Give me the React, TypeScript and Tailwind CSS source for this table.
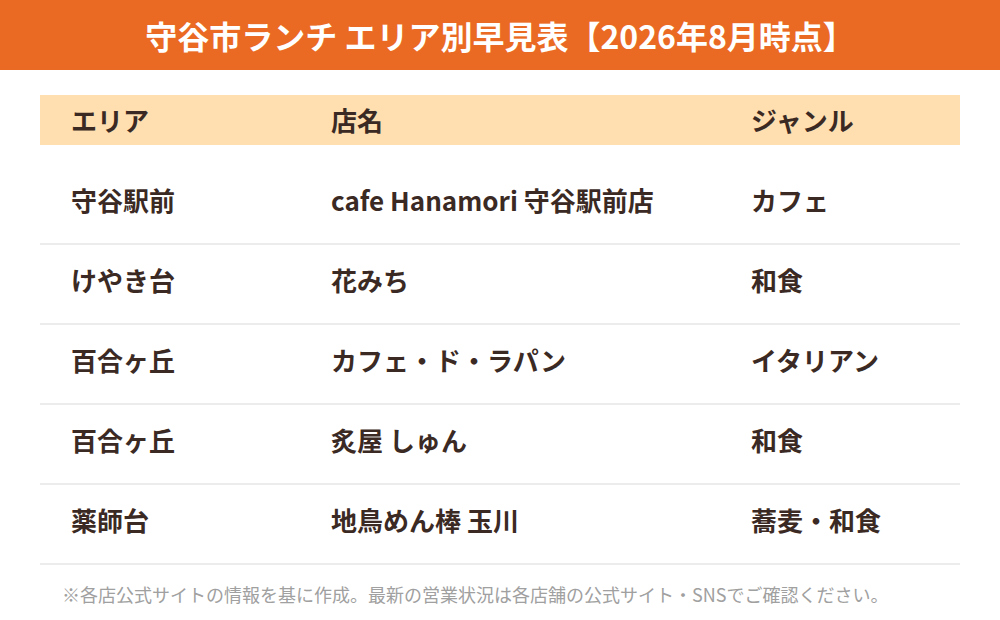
import React from "react";

const rows = [
  ["守谷駅前", "cafe Hanamori 守谷駅前店", "カフェ"],
  ["けやき台", "花みち", "和食"],
  ["百合ヶ丘", "カフェ・ド・ラパン", "イタリアン"],
  ["百合ヶ丘", "炙屋 しゅん", "和食"],
  ["薬師台", "地鳥めん棒 玉川", "蕎麦・和食"],
];

export default function App() {
  return (
    <div
      className="w-[1000px] h-[620px] bg-white overflow-hidden"
      style={{ fontFamily: '"Noto Sans CJK JP", "Noto Sans", sans-serif' }}
    >
      <div className="h-[70px] bg-[#ea6a24] flex items-center justify-center">
        <h1 className="text-white font-bold text-[32px] leading-none">
          守谷市ランチ エリア別早見表【2026年8月時点】
        </h1>
      </div>
      <div className="mx-[40px] mt-[25px]">
        <div className="grid grid-cols-[260px_420px_240px] h-[50px] items-center bg-[#ffdfb0] text-[#3b2a24] font-bold text-[26px] leading-none">
          <div className="pl-[31px]">エリア</div>
          <div className="pl-[31px]">店名</div>
          <div className="pl-[31px]">ジャンル</div>
        </div>
        <div className="pt-[20px]">
          {rows.map((r, i) => (
            <div
              key={i}
              className="grid grid-cols-[260px_420px_240px] h-[80px] items-center border-b-2 border-[#ececec] text-[#3b2a24] font-bold text-[26px] leading-none pb-[8px]"
            >
              <div className="pl-[31px]">{r[0]}</div>
              <div className="pl-[31px]">{r[1]}</div>
              <div className="pl-[31px]">{r[2]}</div>
            </div>
          ))}
        </div>
        <p className="mt-[16px] pl-[22px] text-[18px] text-[#a0a0a0]">
          ※各店公式サイトの情報を基に作成。最新の営業状況は各店舗の公式サイト・SNSでご確認ください。
        </p>
      </div>
    </div>
  );
}
